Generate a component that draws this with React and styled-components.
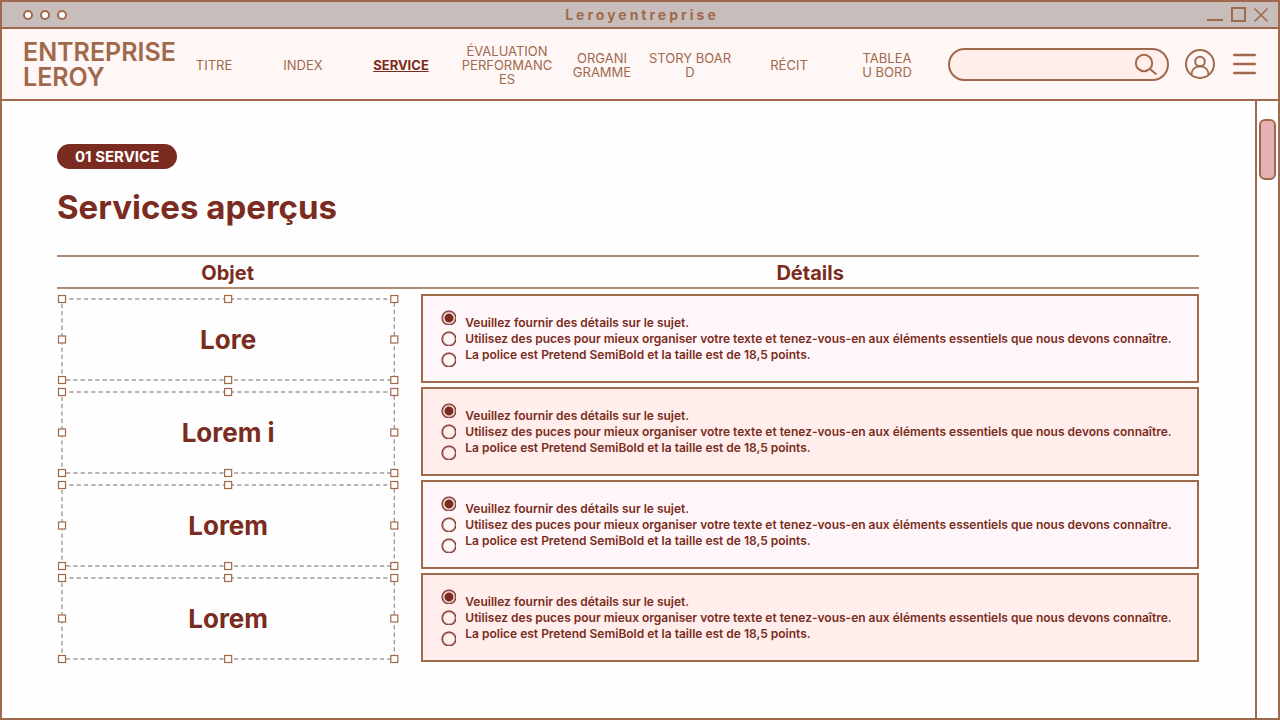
import React from 'react';
import styled, { createGlobalStyle } from 'styled-components';

const LINE = '#a0694c';
const DARK = '#7a2c20';
const BLUSH = '#fff6f6';
const ROSE = '#ffeeec';

const GlobalStyle = createGlobalStyle`
  * {
    box-sizing: border-box;
  }

  body {
    margin: 0;
    background: #fefefe;
    font-family: Inter, "Noto Sans", sans-serif;
  }

  button {
    padding: 0;
    border: 0;
    background: none;
    color: inherit;
    cursor: pointer;
  }

  svg {
    display: block;
  }
`;

const Window = styled.div`
  display: flex;
  flex-direction: column;
  min-height: 100vh;
  border: 2px solid ${LINE};
  color: ${LINE};
`;

const TitleBar = styled.div`
  display: grid;
  grid-template-columns: 1fr auto 1fr;
  align-items: center;
  height: 27px;
  padding: 0 9px 0 13px;
  border-bottom: 2px solid ${LINE};
  background: #c7bdba;
`;

const Dots = styled.div`
  display: flex;
  gap: 7px;
  padding-left: 8px;
`;

const Dot = styled.span`
  width: 10px;
  height: 10px;
  border: 2px solid ${LINE};
  border-radius: 50%;
  background: #fff;
`;

const WindowTitle = styled.span`
  font-size: 14px;
  font-weight: 700;
  line-height: 16px;
  letter-spacing: 3px;
`;

const WindowButtons = styled.div`
  display: flex;
  justify-content: flex-end;
  gap: 6px;
`;

const Header = styled.header`
  display: flex;
  align-items: center;
  min-height: 72px;
  padding: 0 22px 0 21px;
  border-bottom: 2px solid ${LINE};
  background: ${BLUSH};
`;

const Brand = styled.div`
  width: 155px;
  padding-top: 2px;
  font-size: 25px;
  font-weight: 600;
  line-height: 25px;
`;

const Nav = styled.nav`
  flex: 1;
  display: grid;
  grid-template-columns: 72fr 106fr 90fr 122fr 68fr 108fr 90fr 106fr;
  align-items: center;
  padding-top: 2px;
`;

const NavLink = styled.a`
  color: ${({ $active }) => ($active ? DARK : LINE)};
  font-size: 13px;
  font-weight: ${({ $active }) => ($active ? 700 : 400)};
  line-height: 14px;
  text-align: center;
  text-decoration: ${({ $active }) => ($active ? 'underline' : 'none')};
  white-space: nowrap;
`;

const Search = styled.form`
  display: flex;
  align-items: center;
  width: 221px;
  height: 33px;
  margin: 0 16px 0 8px;
  padding: 0 9px 0 14px;
  border: 2px solid ${LINE};
  border-radius: 17px;
  background: ${ROSE};
`;

const SearchInput = styled.input`
  flex: 1;
  min-width: 0;
  border: 0;
  outline: 0;
  background: transparent;
  color: ${DARK};
  font: inherit;
  font-size: 14px;
`;

const MenuButton = styled.button`
  margin-left: 18px;
`;

const Body = styled.div`
  flex: 1;
  display: flex;
`;

const Main = styled.main`
  flex: 1;
  padding: 43px 56px 43px 55px;
  color: ${DARK};
`;

const Badge = styled.span`
  display: inline-block;
  padding: 0 18px;
  border-radius: 13px;
  background: ${DARK};
  color: #fff;
  font-size: 15px;
  font-weight: 700;
  line-height: 25px;
`;

const Title = styled.h1`
  margin: 16px 0 26px;
  font-size: 33px;
  font-weight: 700;
  line-height: 44px;
`;

const Table = styled.table`
  width: 100%;
  border-collapse: separate;
  border-spacing: 0;
  table-layout: fixed;
`;

const HeadCell = styled.th`
  width: ${({ $width }) => $width || 'auto'};
  height: 34px;
  padding: ${({ $width }) => ($width ? '2px 23px 0 0' : '2px 0 0')};
  border-top: 2px solid #b18b72;
  border-bottom: 2px solid #b18b72;
  font-size: 20px;
  font-weight: 700;
  line-height: 24px;
`;

const TableBody = styled.tbody`
  &::before {
    content: '';
    display: table-row;
    height: 1px;
  }
`;

const SubjectCell = styled.th`
  padding: 5px 27px 0 5px;
`;

const DetailCell = styled.td`
  padding: 4px 0 0;
`;

const Selection = styled.div`
  position: relative;
  display: flex;
  align-items: center;
  justify-content: center;
  height: 81px;
  font-size: 26px;
  font-weight: 700;
`;

const Frame = styled.svg`
  position: absolute;
  inset: 0;
  width: 100%;
  height: 100%;
  overflow: visible;
`;

const Panel = styled.div`
  display: flex;
  align-items: center;
  gap: 9px;
  padding: 14px 18px;
  border: 2px solid ${LINE};
  background: ${({ $tinted }) => ($tinted ? ROSE : '#fff6f9')};
`;

const Radios = styled.div`
  display: flex;
  flex-direction: column;
  gap: 6px;
`;

const Radio = styled.input`
  appearance: none;
  width: 15px;
  height: 15px;
  margin: 0;
  background: radial-gradient(circle at 8px 8px, transparent 5px, ${DARK} 7px, transparent 8px);

  &:checked {
    background: radial-gradient(
      circle at 8px 8px,
      ${DARK} 4px,
      transparent 5px,
      ${DARK} 7px,
      transparent 8px
    );
  }
`;

const Lines = styled.div`
  display: flex;
  flex-direction: column;
  font-size: 12px;
  font-weight: 600;
  line-height: 16px;
`;

const ScrollTrack = styled.div`
  width: 23px;
  padding: 18px 2px;
  border-left: 2px solid ${LINE};
`;

const ScrollThumb = styled.div`
  height: 61px;
  border: 2px solid ${LINE};
  border-radius: 6px;
  background: #e6b0b4;
`;

const links = [
  { lines: ['TITRE'] },
  { lines: ['INDEX'] },
  { lines: ['SERVICE'], active: true },
  { lines: ['ÉVALUATION', 'PERFORMANC', 'ES'] },
  { lines: ['ORGANI', 'GRAMME'] },
  { lines: ['STORY BOAR', 'D'] },
  { lines: ['RÉCIT'] },
  { lines: ['TABLEA', 'U BORD'] },
];

const subjects = ['Lore', 'Lorem i', 'Lorem', 'Lorem'];

const details = [
  'Veuillez fournir des détails sur le sujet.',
  'Utilisez des puces pour mieux organiser votre texte et tenez-vous-en aux éléments essentiels que nous devons connaître.',
  'La police est Pretend SemiBold et la taille est de 18,5 points.',
];

const handles = [
  ['0%', '0%'], ['50%', '0%'], ['100%', '0%'],
  ['0%', '50%'], ['100%', '50%'],
  ['0%', '100%'], ['50%', '100%'], ['100%', '100%'],
];

function SelectionFrame() {
  return (
    <Frame aria-hidden="true">
      <rect
        width="100%"
        height="100%"
        fill="none"
        stroke="#a39a9a"
        strokeWidth="1.4"
        strokeDasharray="4.3 3"
      />
      {handles.map(([x, y]) => (
        <rect
          key={x + y}
          x={x}
          y={y}
          width="7"
          height="7"
          transform="translate(-3.5 -3.5)"
          fill="#fff"
          stroke={LINE}
          strokeWidth="1.2"
        />
      ))}
    </Frame>
  );
}

function ServiceRow({ subject, index }) {
  const name = `service-${index}`;

  return (
    <tr>
      <SubjectCell scope="row">
        <Selection>
          <SelectionFrame />
          {subject}
        </Selection>
      </SubjectCell>
      <DetailCell>
        <Panel $tinted={index % 2 === 1}>
          <Radios>
            {details.map((text, i) => (
              <Radio key={text} type="radio" name={name} id={`${name}-${i}`} defaultChecked={i === 0} />
            ))}
          </Radios>
          <Lines>
            {details.map((text, i) => (
              <label key={text} htmlFor={`${name}-${i}`}>{text}</label>
            ))}
          </Lines>
        </Panel>
      </DetailCell>
    </tr>
  );
}

function App() {
  return (
    <Window>
      <GlobalStyle />
      <TitleBar>
        <Dots>
          <Dot />
          <Dot />
          <Dot />
        </Dots>
        <WindowTitle>Leroyentreprise</WindowTitle>
        <WindowButtons>
          <button type="button" aria-label="Réduire">
            <svg width="18" height="16" fill="none" stroke="currentColor" strokeWidth="2">
              <path d="M1 13H17" />
            </svg>
          </button>
          <button type="button" aria-label="Agrandir">
            <svg width="17" height="16" fill="none" stroke="currentColor" strokeWidth="2">
              <rect x="2" y="1" width="13" height="13" />
            </svg>
          </button>
          <button type="button" aria-label="Fermer">
            <svg width="16" height="16" fill="none" stroke="currentColor" strokeWidth="1.6">
              <path d="M1.5 1.5L14.5 14.5M14.5 1.5L1.5 14.5" />
            </svg>
          </button>
        </WindowButtons>
      </TitleBar>

      <Header>
        <Brand>ENTREPRISE LEROY</Brand>
        <Nav>
          {links.map(({ lines, active }) => (
            <NavLink key={lines[0]} href="#" $active={active}>
              {lines.map((line, i) => (
                <React.Fragment key={line}>
                  {i > 0 && <br />}
                  {line}
                </React.Fragment>
              ))}
            </NavLink>
          ))}
        </Nav>
        <Search role="search">
          <SearchInput type="search" aria-label="Rechercher" />
          <button type="submit" aria-label="Lancer la recherche">
            <svg width="24" height="24" fill="none" stroke="currentColor" strokeWidth="2">
              <circle cx="10" cy="11" r="8.2" />
              <path d="M16 17L22.5 22.5" />
            </svg>
          </button>
        </Search>
        <button type="button" aria-label="Compte">
          <svg width="30" height="30" fill="none" stroke="currentColor" strokeWidth="2">
            <circle cx="15" cy="15" r="14" />
            <circle cx="15" cy="12.5" r="4.8" />
            <path d="M6.5 26C6.5 20.5 10 17.3 15 17.3S23.5 20.5 23.5 26" />
          </svg>
        </button>
        <MenuButton type="button" aria-label="Menu">
          <svg width="23" height="22" stroke="currentColor" strokeWidth="2.6" strokeLinecap="round">
            <path d="M1.3 2H21.7M1.3 11H21.7M1.3 20H21.7" />
          </svg>
        </MenuButton>
      </Header>

      <Body>
        <Main>
          <Badge>01 SERVICE</Badge>
          <Title>Services aperçus</Title>
          <Table>
            <thead>
              <tr>
                <HeadCell scope="col" $width="31.9%">Objet</HeadCell>
                <HeadCell scope="col">Détails</HeadCell>
              </tr>
            </thead>
            <TableBody>
              {subjects.map((subject, i) => (
                <ServiceRow key={i} subject={subject} index={i} />
              ))}
            </TableBody>
          </Table>
        </Main>
        <ScrollTrack>
          <ScrollThumb />
        </ScrollTrack>
      </Body>
    </Window>
  );
}

export default App;
